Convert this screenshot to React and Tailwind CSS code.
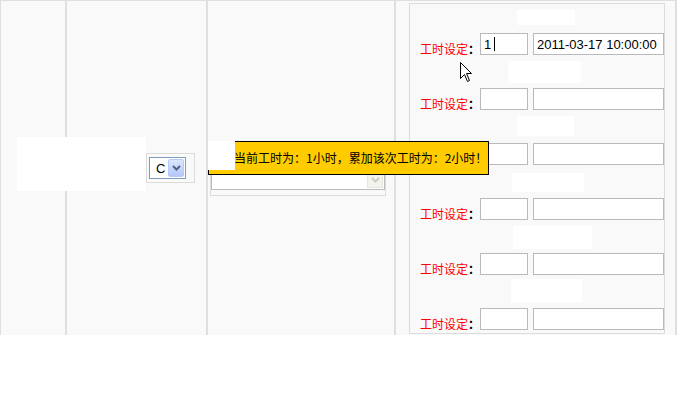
import React from "react";

function Row({ rowH, boxCls, date, active }) {
  return (
    <div className={`flex flex-col ${rowH}`}>
      <div className={`bg-white ${boxCls}`} />
      <div className="mt-auto flex items-end pl-[10px]">
        <div className="w-[60px] whitespace-nowrap text-[12px] leading-[12px] [text-spacing-trim:space-all]">
          <span className="text-[#ff0000]">工时设定</span>
          <span className="font-bold text-black">：</span>
        </div>
        <div className="flex h-[22px] w-[48px] items-center border border-[#b9b9b9] bg-white pl-[3px] [font-family:'Liberation_Sans',sans-serif] text-[13px] leading-none text-black">
          {active ? (
            <>
              <span>1</span>
              <span className="ml-[3px] h-[14px] w-[1px] bg-black" />
            </>
          ) : null}
        </div>
        <div className="ml-[5px] flex h-[22px] w-[131px] items-center border border-[#b9b9b9] bg-white pl-[3px] [font-family:'Liberation_Sans',sans-serif] text-[13px] leading-none text-black whitespace-nowrap">
          {date}
        </div>
      </div>
    </div>
  );
}

export default function App() {
  return (
    <div className="relative h-[400px] w-[680px] bg-white [font-family:'Noto_Sans_CJK_SC',sans-serif] text-black">
      <div className="flex h-[335px] w-[677px]">
        {/* cell 1 */}
        <div className="h-full w-[66px] border-t border-l border-r border-[#dfdfdf] bg-[#f9f9f9]" />
        {/* cell 2 */}
        <div className="flex h-full w-[141px] items-center justify-end border-t border-l border-r border-[#dfdfdf] bg-[#f9f9f9] pr-[11px]">
          <div className="flex h-[30px] w-[49px] items-center border border-[#dcdcdc] pl-[2px]">
            <div className="flex h-[22px] w-[37px] items-center border border-[#7f9db9] bg-white p-[1px]">
              <span className="ml-[5px] flex-1 [font-family:'Liberation_Sans',sans-serif] text-[13px] leading-none">C</span>
              <div className="flex h-[18px] w-[16px] items-center justify-center rounded-[2px] border border-[#b7c9f6] bg-gradient-to-b from-[#dce6fe] to-[#b4c7f8]">
                <svg width="9" height="6" viewBox="0 0 9 6">
                  <path d="M1 1 L4.5 4.5 L8 1" fill="none" stroke="#4d6185" strokeWidth="2" />
                </svg>
              </div>
            </div>
          </div>
        </div>
        {/* cell 3 */}
        <div className="flex h-full w-[188px] items-center border-t border-l border-r border-[#dfdfdf] bg-[#f9f9f9] pl-[2px]">
          <div className="h-[55px] w-[176px] border border-[#dcdcdc] pt-[28px]">
            <div className="flex h-[20px] w-full items-center justify-end border border-[#bcbcbc] bg-white pr-[1px]">
              <div className="flex h-[16px] w-[16px] items-center justify-center border border-[#e6e6dc] bg-[#f4f4ef]">
                <svg width="9" height="6" viewBox="0 0 9 6">
                  <path d="M1 1 L4.5 4.5 L8 1" fill="none" stroke="#cfcdc0" strokeWidth="2" />
                </svg>
              </div>
            </div>
          </div>
        </div>
        {/* cell 4 */}
        <div className="h-full w-[282px] border-t border-l border-r-2 border-[#dfdfdf] bg-[#f9f9f9] pl-[13px] pt-[2px]">
          <div className="flex h-[331px] w-[256px] flex-col border border-[#dcdcdc] bg-[#f9f9f9]">
            <Row rowH="h-[51px]" boxCls="ml-[107px] mt-[6px] w-[58px] h-[15px]" date="2011-03-17 10:00:00" active />
            <Row rowH="h-[55px]" boxCls="ml-[98px] mt-[6px] w-[73px] h-[22px]" />
            <Row rowH="h-[55px]" boxCls="ml-[107px] mt-[6px] w-[57px] h-[20px]" />
            <Row rowH="h-[55px]" boxCls="ml-[102px] mt-[8px] w-[72px] h-[19px]" />
            <Row rowH="h-[55px]" boxCls="ml-[103px] mt-[6px] w-[79px] h-[23px]" />
            <Row rowH="h-[55px]" boxCls="ml-[101px] mt-[4px] w-[71px] h-[23px]" />
          </div>
        </div>
      </div>

      {/* redacted overlay in first cells */}
      <div className="absolute left-[17px] top-[137px] h-[54px] w-[129px] bg-white" />

      {/* tooltip */}
      <div className="absolute left-[208px] top-[141px] flex h-[34px] w-[281px] items-center border border-black bg-[#ffcc00] pl-[25px] text-[12px] leading-[12px] whitespace-nowrap [text-spacing-trim:space-all]">
        <div className="absolute left-[-1px] top-[-1px] h-[29px] w-[27px] bg-white" />
        <span>当前工时为：1小时，累加该次工时为：2小时！</span>
      </div>

      {/* mouse cursor */}
      <svg className="absolute left-[460px] top-[62px]" width="13" height="22" viewBox="0 0 13 22">
        <path d="M0.5 0.5 L0.5 16.5 L4.5 12.5 L7.5 19.5 L9.5 18.5 L6.5 11.5 L11.5 11.5 Z" fill="white" stroke="black" strokeWidth="1" strokeLinejoin="miter" />
      </svg>
    </div>
  );
}
